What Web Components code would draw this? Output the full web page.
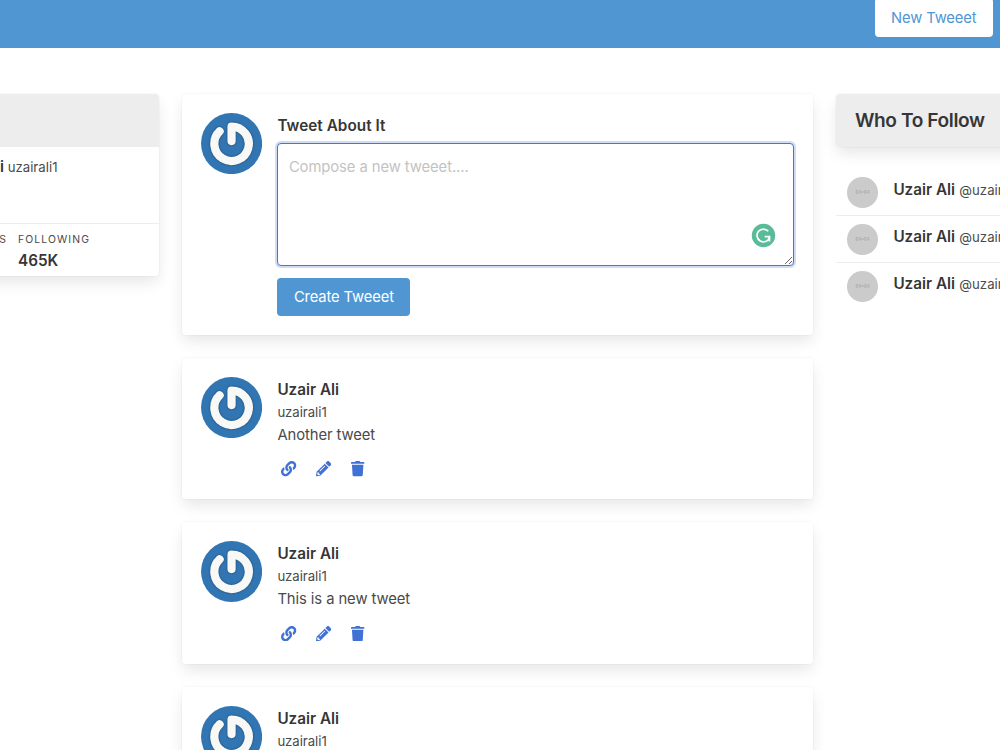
<!DOCTYPE html>
<html lang="en">
<head>
<meta charset="utf-8">
<title>Tweeet</title>
<style>
  html {
    font-size: 15.28px;
  }
  body {
    margin: 0;
    height: 750px;
    overflow: hidden;
    background: #fff;
    color: #4a4a4a;
    font-family: Inter, "Liberation Sans", sans-serif;
    line-height: 23px;
  }
</style>
</head>
<body>
<tweet-app></tweet-app>

<script>
const ICONS = {
  link: ["0 0 512 512", "M326.612 185.391c59.747 59.809 58.927 155.698.36 214.59-.11.12-.24.25-.36.37l-67.2 67.2c-59.27 59.27-155.699 59.262-214.96 0-59.27-59.26-59.27-155.7 0-214.96l37.106-37.106c9.84-9.84 26.786-3.3 27.294 10.606.648 17.722 3.826 35.527 9.69 52.721 1.986 5.822.567 12.262-3.783 16.612l-13.087 13.087c-28.026 28.026-28.905 73.66-1.155 101.96 28.024 28.579 74.086 28.749 102.325.51l67.2-67.19c28.191-28.191 28.073-73.757 0-101.83-3.701-3.694-7.429-6.564-10.341-8.569a16.037 16.037 0 0 1-6.947-12.606c-.396-10.567 3.348-21.456 11.698-29.806l21.054-21.055c5.521-5.521 14.182-6.199 20.584-1.731a152.482 152.482 0 0 1 20.522 17.197zM467.547 44.449c-59.261-59.262-155.69-59.27-214.96 0l-67.2 67.2c-.12.12-.25.25-.36.37-58.566 58.892-59.387 154.781.36 214.59a152.454 152.454 0 0 0 20.521 17.196c6.402 4.468 15.064 3.789 20.584-1.731l21.054-21.055c8.35-8.35 12.094-19.239 11.698-29.806a16.037 16.037 0 0 0-6.947-12.606c-2.912-2.005-6.64-4.875-10.341-8.569-28.073-28.073-28.191-73.639 0-101.83l67.2-67.19c28.239-28.239 74.3-28.069 102.325.51 27.75 28.3 26.872 73.934-1.155 101.96l-13.087 13.087c-4.35 4.35-5.769 10.79-3.783 16.612 5.864 17.194 9.042 34.999 9.69 52.721.509 13.906 17.454 20.446 27.294 10.606l37.106-37.106c59.271-59.259 59.271-155.699.001-214.959z"],
  pencil: ["0 0 512 512", "M497.9 142.1l-46.1 46.1c-4.7 4.7-12.3 4.7-17 0l-111-111c-4.7-4.7-4.7-12.3 0-17l46.1-46.1c18.7-18.7 49.1-18.7 67.9 0l60.1 60.1c18.8 18.7 18.8 49.1 0 67.9zM284.2 99.8L21.6 362.4.4 483.9c-2.9 16.4 11.4 30.6 27.8 27.8l121.5-21.3 262.6-262.6c4.7-4.7 4.7-12.3 0-17l-111-111c-4.8-4.7-12.4-4.7-17.1 0zM124.1 339.9c-5.5-5.5-5.5-14.3 0-19.8l154-154c5.5-5.5 14.3-5.5 19.8 0s5.5 14.3 0 19.8l-154 154c-5.5 5.5-14.3 5.5-19.8 0zM88 424h48v36.3l-64.5 11.3-31.1-31.1L51.7 376H88v48z"],
  trash: ["0 0 448 512", "M432 32H312l-9.4-18.7A24 24 0 0 0 281.1 0H166.8a23.72 23.72 0 0 0-21.4 13.3L136 32H16A16 16 0 0 0 0 48v32a16 16 0 0 0 16 16h416a16 16 0 0 0 16-16V48a16 16 0 0 0-16-16zM53.2 467a48 48 0 0 0 47.9 45h245.8a48 48 0 0 0 47.9-45L416 128H32z"]
};

class ActionIcon extends HTMLElement {
  constructor() {
    super();
    const [box, path] = ICONS[this.getAttribute("name")];
    this.attachShadow({ mode: "open" }).innerHTML = `
      <style>
        :host {
          display: flex;
          align-items: center;
          justify-content: center;
          width: 23px;
          height: 23px;
          color: #3f72d4;
        }
        svg { height: 1rem; fill: currentColor; }
      </style>
      <svg viewBox="${box}"><path d="${path}"/></svg>
    `;
  }
}

class UserAvatar extends HTMLElement {
  constructor() {
    super();
    this.attachShadow({ mode: "open" }).innerHTML = `
      <style>
        :host { display: block; flex: none; width: 4rem; height: 4rem; }
        svg { display: block; width: 100%; height: 100%; }
        .ring {
          fill: none;
          stroke: #f8f8f6;
          stroke-width: 8.2;
          stroke-linecap: round;
          stroke-linejoin: round;
          filter: drop-shadow(0.5px 0.5px 1.2px rgba(0,0,0,0.4));
        }
      </style>
      <svg viewBox="0 0 61 61">
        <circle cx="30.5" cy="30.5" r="30.5" fill="#3275b3"/>
        <path class="ring" d="M18.6 18.3A17.2 17.2 0 1 0 30.5 13.5V28"/>
      </svg>
    `;
  }
}

class UiCard extends HTMLElement {
  constructor() {
    super();
    this.attachShadow({ mode: "open" }).innerHTML = `
      <style>
        :host {
          display: block;
          background: #fff;
          border-radius: 4px;
          box-shadow: 0 0.5em 1em -0.125em rgba(10,10,10,0.1), 0 0 0 1px rgba(10,10,10,0.02);
        }
      </style>
      <slot></slot>
    `;
  }
}

class UiButton extends HTMLElement {
  constructor() {
    super();
    this.attachShadow({ mode: "open" }).innerHTML = `
      <style>
        :host { display: block; }
        button {
          display: block;
          box-sizing: border-box;
          height: 38.2px;
          padding: 2px 15.5px 0;
          border: 1px solid transparent;
          border-radius: 4px;
          background: #4f96d3;
          color: #fff;
          font: inherit;
          font-size: 14.75px;
          letter-spacing: -0.12px;
          white-space: nowrap;
        }
        :host([light]) button { background: #fff; color: #4f96d3; }
      </style>
      <button><slot></slot></button>
    `;
  }
}

class TopBar extends HTMLElement {
  constructor() {
    super();
    this.attachShadow({ mode: "open" }).innerHTML = `
      <style>
        :host {
          display: flex;
          justify-content: flex-end;
          align-items: flex-end;
          box-sizing: border-box;
          height: 47.5px;
          padding: 0 7px 11px 0;
          background: #4f96d3;
        }
      </style>
      <ui-button light>New Tweeet</ui-button>
    `;
  }
}

class ProfileCard extends HTMLElement {
  constructor() {
    super();
    this.attachShadow({ mode: "open" }).innerHTML = `
      <style>
        :host { display: block; }
        .cover { height: 52.7px; border-radius: 4px 4px 0 0; background: #ededed; }
        .who {
          box-sizing: border-box;
          height: 76px;
          padding: 8px 101.5px 0 0;
          text-align: right;
          font-size: 13.2px;
        }
        strong { color: #363636; font-size: 15.28px; font-weight: 600; }
        .stats {
          display: flex;
          justify-content: flex-end;
          gap: 11px;
          box-sizing: border-box;
          height: 53.8px;
          padding: 7px 69px 0 0;
          border-top: 1px solid #ededed;
        }
        .label {
          font-size: 10.4px;
          letter-spacing: 1.1px;
          text-transform: uppercase;
          line-height: 17px;
        }
        .stats strong { display: block; line-height: 25px; }
      </style>
      <ui-card>
        <div class="cover"></div>
        <div class="who"><strong>Uzair Ali</strong> uzairali1</div>
        <div class="stats">
          <div><div class="label">Tweets</div></div>
          <div><div class="label">Following</div><strong>465K</strong></div>
        </div>
      </ui-card>
    `;
  }
}

class ComposeCard extends HTMLElement {
  constructor() {
    super();
    this.attachShadow({ mode: "open" }).innerHTML = `
      <style>
        :host { display: block; }
        .media { display: flex; gap: 1rem; padding: 19px; }
        .form { flex: 1; min-width: 0; }
        label { display: block; padding-top: 1px; color: #363636; font-weight: 600; letter-spacing: 0.05px; margin-bottom: 6.3px; }
        .field { position: relative; margin-bottom: 11.5px; }
        textarea {
          display: block;
          box-sizing: border-box;
          width: 100%;
          height: 123px;
          padding: 12px 11px 11px 10.5px;
          border: 1px solid #4677cb;
          border-radius: 4px;
          outline: none;
          box-shadow: 0 0 0 2px rgba(66,113,214,0.25);
          background: #fff;
          font: inherit;
          font-size: 14.8px;
          letter-spacing: -0.08px;
          resize: vertical;
        }
        textarea::placeholder { color: #c3c3c3; }
        .checker { position: absolute; right: 18.5px; bottom: 18px; width: 25px; height: 25px; }
      </style>
      <ui-card>
        <div class="media">
          <user-avatar></user-avatar>
          <div class="form">
            <label>Tweet About It</label>
            <div class="field">
              <textarea placeholder="Compose a new tweeet...."></textarea>
              <svg class="checker" viewBox="0 0 25 25">
                <circle cx="12.5" cy="12.5" r="11.7" fill="#5abb98"/>
                <path d="M17.3 8.3A6.4 6.4 0 1 0 18.4 14.7M13.7 13.7H18.5V18.4" fill="none" stroke="#fff" stroke-width="1.7"/>
              </svg>
            </div>
            <ui-button style="width: fit-content">Create Tweeet</ui-button>
          </div>
        </div>
      </ui-card>
    `;
  }
}

class TweetCard extends HTMLElement {
  constructor() {
    super();
    this.attachShadow({ mode: "open" }).innerHTML = `
      <style>
        :host { display: block; }
        .media { display: flex; gap: 1rem; padding: 19px; }
        .body { padding-top: 1px; }
        strong { display: block; color: #363636; font-weight: 600; }
        .handle { font-size: 13.2px; letter-spacing: -0.05px; }
        .text { font-size: 14.8px; letter-spacing: -0.08px; }
        .actions { display: flex; gap: 11.5px; margin-top: 10.5px; }
      </style>
      <ui-card>
        <div class="media">
          <user-avatar></user-avatar>
          <div class="body">
            <strong>Uzair Ali</strong>
            <div class="handle">uzairali1</div>
            <div class="text"><slot></slot></div>
            <div class="actions">
              <action-icon name="link"></action-icon>
              <action-icon name="pencil"></action-icon>
              <action-icon name="trash"></action-icon>
            </div>
          </div>
        </div>
      </ui-card>
    `;
  }
}

class FollowItem extends HTMLElement {
  constructor() {
    super();
    this.attachShadow({ mode: "open" }).innerHTML = `
      <style>
        :host {
          display: flex;
          gap: 15.5px;
          box-sizing: border-box;
          height: 47px;
          padding: 8px 0 0 11.3px;
          border-bottom: 1px solid #ededed;
          white-space: nowrap;
        }
        :host(:last-of-type) { border-bottom: 0; }
        .pic {
          display: flex;
          align-items: center;
          justify-content: center;
          flex: none;
          width: 30.6px;
          height: 30.6px;
          border-radius: 50%;
          background: #cbcbcb;
          color: #a0a0a0;
          font-size: 4.5px;
        }
        .name { padding-top: 1px; }
        strong { color: #363636; font-weight: 600; }
        small { font-size: 13.2px; }
      </style>
      <div class="pic">64x64</div>
      <div class="name"><strong>Uzair Ali</strong> <small>@uzairali1</small></div>
    `;
  }
}

class FollowPanel extends HTMLElement {
  constructor() {
    super();
    this.attachShadow({ mode: "open" }).innerHTML = `
      <style>
        :host { display: block; }
        .title {
          display: flex;
          align-items: center;
          box-sizing: border-box;
          height: 52.7px;
          padding: 1px 0 0 19px;
          border-radius: 4px;
          background: #ededed;
          color: #363636;
          font-size: 19.1px;
          font-weight: 600;
          letter-spacing: -0.4px;
        }
        .list { padding-top: 22.3px; }
      </style>
      <ui-card><div class="title">Who To Follow</div></ui-card>
      <div class="list">
        <follow-item></follow-item>
        <follow-item></follow-item>
        <follow-item></follow-item>
      </div>
    `;
  }
}

class TweetApp extends HTMLElement {
  constructor() {
    super();
    this.attachShadow({ mode: "open" }).innerHTML = `
      <style>
        :host { display: block; height: 750px; overflow: hidden; }
        /* wider than the window on purpose, both side columns run off the edge */
        .columns {
          display: grid;
          grid-template-columns: 304px 631px 304px;
          gap: 23px;
          align-items: start;
          width: 1285px;
          margin: 46.5px 0 0 -145px;
        }
        .feed { display: flex; flex-direction: column; gap: 23px; }
      </style>
      <top-bar></top-bar>
      <div class="columns">
        <profile-card></profile-card>
        <div class="feed">
          <compose-card></compose-card>
          <tweet-card>Another tweet</tweet-card>
          <tweet-card>This is a new tweet</tweet-card>
          <tweet-card>Hello</tweet-card>
        </div>
        <follow-panel></follow-panel>
      </div>
    `;
  }
}

customElements.define("action-icon", ActionIcon);
customElements.define("user-avatar", UserAvatar);
customElements.define("ui-card", UiCard);
customElements.define("ui-button", UiButton);
customElements.define("top-bar", TopBar);
customElements.define("profile-card", ProfileCard);
customElements.define("compose-card", ComposeCard);
customElements.define("tweet-card", TweetCard);
customElements.define("follow-item", FollowItem);
customElements.define("follow-panel", FollowPanel);
customElements.define("tweet-app", TweetApp);
</script>
</body>
</html>
